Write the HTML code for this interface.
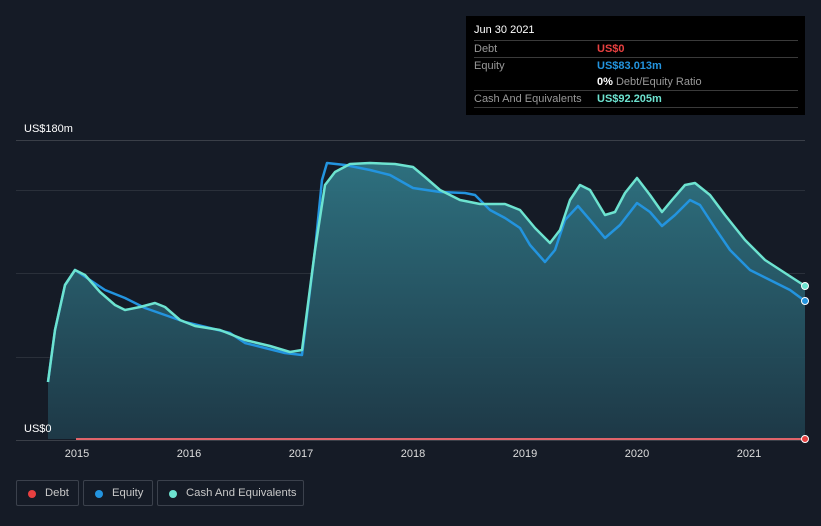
<!DOCTYPE html>
<html style="height:526px;overflow:hidden"><head><style>
body{margin:0;width:821px;height:526px;background:#151b26;font-family:"Liberation Sans",sans-serif;overflow:hidden;position:relative}
.tt{position:absolute;left:466px;top:16px;width:339px;height:99px;background:#000;color:#fff;font-size:11px}
.tt .row{position:absolute;left:8px;width:324px;border-top:1px solid #3a3a3a;height:16px;line-height:16px}
.tt span.l{color:#999;position:absolute;left:0}
.tt span.v{position:absolute;left:123px;font-weight:bold}
.leg{position:absolute;top:480px;height:26px;border:1px solid #3b414c;border-radius:2px;color:#c8c8c8;font-size:11.3px;line-height:25px;box-sizing:border-box;white-space:nowrap}
.leg i{position:absolute;left:11px;top:9px;width:8px;height:8px;border-radius:50%}
.leg span{position:absolute;left:28px;top:0}
</style></head><body>
<svg width="821" height="526" style="position:absolute;left:0;top:0">
<defs><linearGradient id="g" x1="0" y1="0" x2="0" y2="1"><stop offset="0" stop-color="#2f7483"/><stop offset="1" stop-color="#1e3a48"/></linearGradient></defs>
<line x1="16" y1="140.5" x2="805" y2="140.5" stroke="#3a3f48"/>
<line x1="16" y1="190.5" x2="805" y2="190.5" stroke="#2a303a"/>
<line x1="16" y1="273.5" x2="805" y2="273.5" stroke="#2a303a"/>
<line x1="16" y1="357.5" x2="805" y2="357.5" stroke="#2a303a"/>
<polygon fill="url(#g)" opacity="0.95" points="48,439 48,382 55,330 65,285 75,270 85,275 100,292 115,305 125,310 140,307 155,303 165,307 180,320 195,326 220,330 245,340 270,346 290,352 302,350 315,250 325,185 335,172 350,164 370,163 395,164 413,167 425,177 440,190 460,200 480,204 505,204 520,210 535,228 550,243 560,230 570,200 580,185 590,190 605,215 615,212 625,193 637,178 650,195 662,212 672,200 685,185 695,183 710,195 725,215 745,240 765,260 785,273 805,286 805,439"/>
<polyline fill="none" stroke="#2394df" stroke-width="2.5" stroke-linejoin="round" points="48,382 55,330 65,285 75,270 90,280 105,290 125,298 145,308 165,315 185,322 210,328 230,333 245,343 265,348 285,353 302,355 315,250 322,180 327,163 345,165 370,170 390,175 413,188 440,192 465,193 475,195 490,210 505,218 520,228 530,245 545,262 555,250 565,220 578,206 590,220 605,238 620,225 637,203 650,212 662,226 675,215 690,200 700,205 715,228 730,250 750,270 770,280 790,290 805,301"/>
<polyline fill="none" stroke="#6de3d0" stroke-width="2.5" stroke-linejoin="round" points="48,382 55,330 65,285 75,270 85,275 100,292 115,305 125,310 140,307 155,303 165,307 180,320 195,326 220,330 245,340 270,346 290,352 302,350 315,250 325,185 335,172 350,164 370,163 395,164 413,167 425,177 440,190 460,200 480,204 505,204 520,210 535,228 550,243 560,230 570,200 580,185 590,190 605,215 615,212 625,193 637,178 650,195 662,212 672,200 685,185 695,183 710,195 725,215 745,240 765,260 785,273 805,286"/>
<line x1="16" y1="440.5" x2="805" y2="440.5" stroke="#3a3f48"/>
<line x1="76" y1="439" x2="805" y2="439" stroke="#e0646a" stroke-width="2"/>
<circle cx="805" cy="439" r="3.5" fill="#e84040" stroke="#fff" stroke-width="1"/>
<circle cx="805" cy="301" r="3.5" fill="#2394df" stroke="#fff" stroke-width="1"/>
<circle cx="805" cy="286" r="3.5" fill="#6de3d0" stroke="#fff" stroke-width="1"/>
<g fill="#fff" font-size="11" font-family="Liberation Sans"><text x="24" y="132">US$180m</text><text x="24" y="432">US$0</text></g>
<g fill="#ddd" font-size="11" text-anchor="middle" font-family="Liberation Sans"><text x="77" y="457">2015</text><text x="189" y="457">2016</text><text x="301" y="457">2017</text><text x="413" y="457">2018</text><text x="525" y="457">2019</text><text x="637" y="457">2020</text><text x="749" y="457">2021</text></g>
</svg>
<div class="tt">
<div style="position:absolute;left:8px;top:8px">Jun 30 2021</div>
<div class="row" style="top:24px"><span class="l">Debt</span><span class="v" style="color:#e84040">US$0</span></div>
<div class="row" style="top:41px"><span class="l">Equity</span><span class="v" style="color:#2394df">US$83.013m</span></div>
<div class="row" style="top:58px;border-top:none"><span class="v" style="font-weight:normal;color:#999"><b style="color:#fff">0%</b> Debt/Equity Ratio</span></div>
<div class="row" style="top:74px;border-bottom:1px solid #3a3a3a"><span class="l">Cash And Equivalents</span><span class="v" style="color:#6de3d0">US$92.205m</span></div>
</div>
<div class="leg" style="left:16px;width:63px"><i style="background:#e84040"></i><span>Debt</span></div>
<div class="leg" style="left:83px;width:70px"><i style="background:#2394df"></i><span>Equity</span></div>
<div class="leg" style="left:157px;width:147px"><i style="background:#6de3d0"></i><span>Cash And Equivalents</span></div>
</body></html>
